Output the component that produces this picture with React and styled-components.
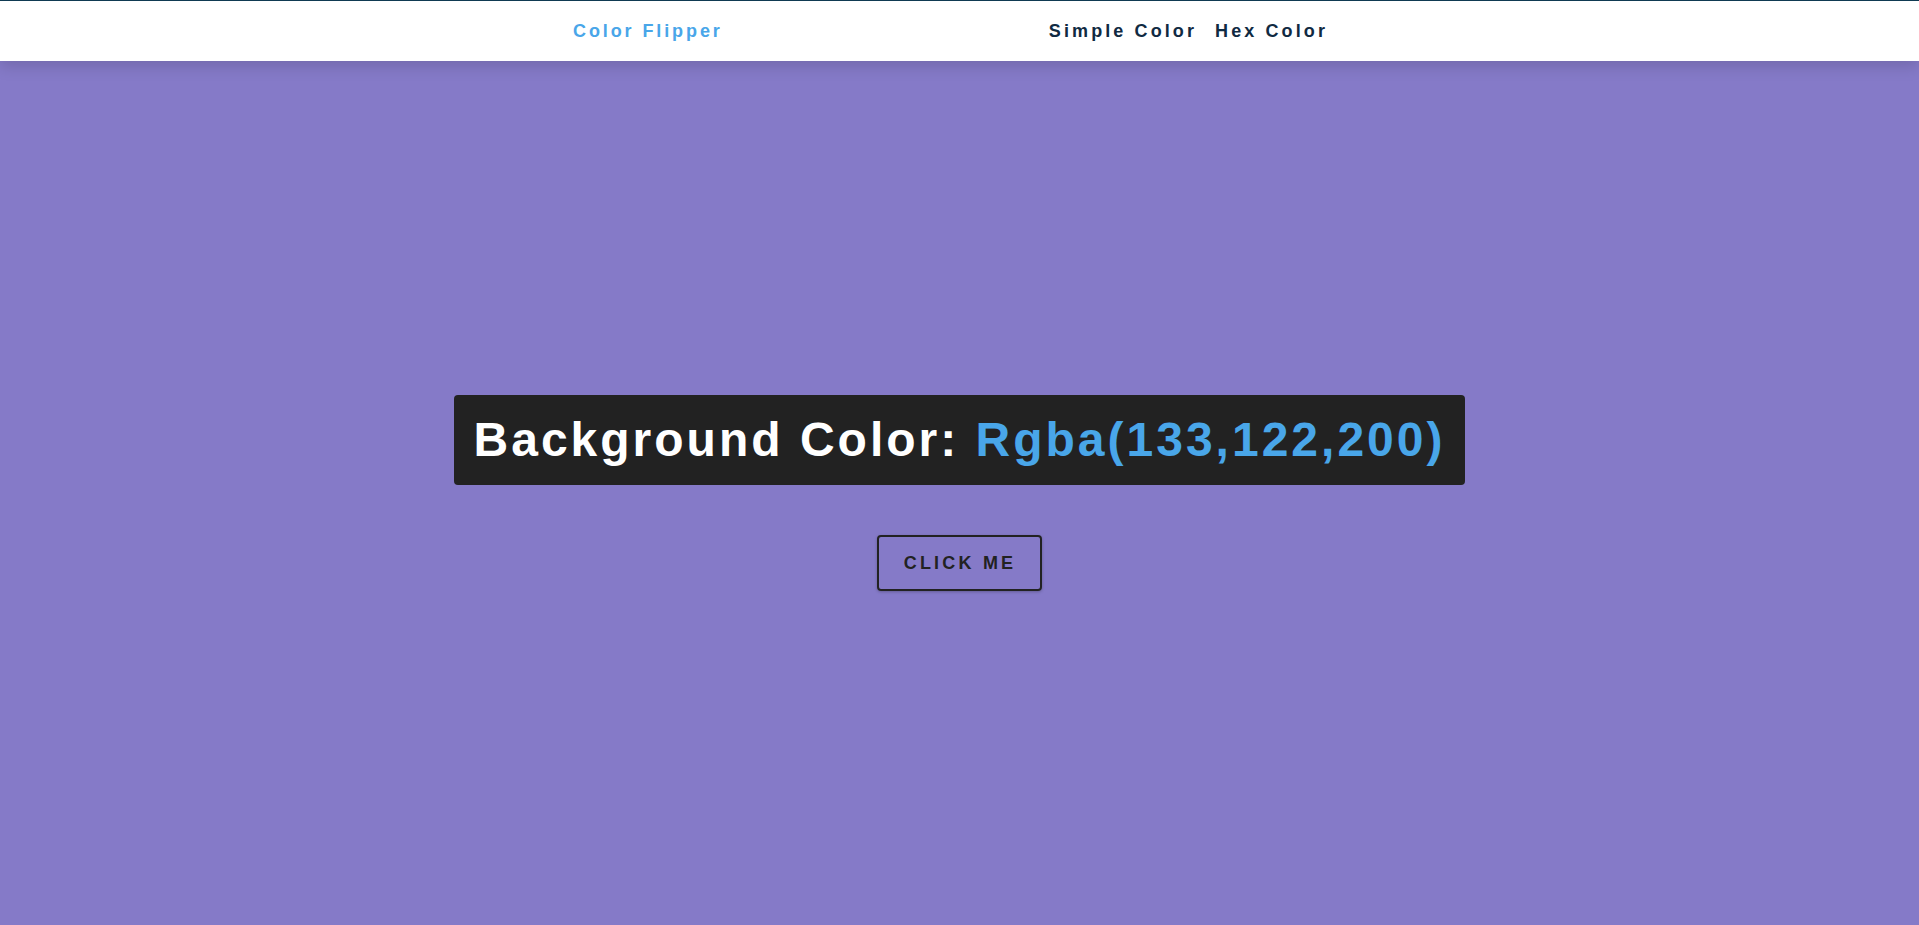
import styled, { createGlobalStyle } from 'styled-components';

const GlobalStyle = createGlobalStyle`
    * {
        box-sizing: border-box;
    }
    body {
        margin: 0;
        font-family: "Liberation Sans", Arial, sans-serif;
    }
`;

export default function App() {
    const color = 'Rgba(133,122,200)';

    return (
        <Page bg="rgb(133,122,200)">
            <GlobalStyle />
            <Nav>
                <NavCenter>
                    <Logo>Color Flipper</Logo>
                    <Links>
                        <NavLink href="#">Simple Color</NavLink>
                        <NavLink href="#">Hex Color</NavLink>
                    </Links>
                </NavCenter>
            </Nav>
            <Main>
                <Title>
                    Background Color: <ColorValue>{color}</ColorValue>
                </Title>
                <FlipButton>Click Me</FlipButton>
            </Main>
        </Page>
    );
}

const Page = styled.div`
    display: flex;
    flex-direction: column;
    min-height: 100vh;
    background: ${(p) => p.bg};
`;

const Nav = styled.nav`
    height: 61px;
    background: #fff;
    border-top: 1px solid #0f3a52;
    box-shadow: 0 5px 15px rgba(0, 0, 0, 0.15);
    display: flex;
    justify-content: center;
    align-items: center;
`;

const NavCenter = styled.div`
    width: 773px;
    display: flex;
    justify-content: space-between;
    align-items: center;
`;

const Logo = styled.h4`
    margin: 0;
    font-size: 18px;
    font-weight: bold;
    color: #49a6e9;
    letter-spacing: 2.9px;
`;

const Links = styled.div`
    display: flex;
    align-items: center;
`;

const NavLink = styled.a`
    font-size: 18px;
    font-weight: bold;
    color: #102a42;
    text-decoration: none;
    letter-spacing: 3.1px;
    margin-right: 18px;
`;

const Main = styled.main`
    flex: 1;
    display: flex;
    flex-direction: column;
    justify-content: center;
    align-items: center;
    gap: 50px;
`;

const Title = styled.h2`
    margin: 0;
    padding: 17px 20px;
    background: #222;
    border-radius: 4px;
    color: #fff;
    font-size: 48px;
    line-height: 56px;
    font-weight: bold;
    letter-spacing: 3px;
    white-space: nowrap;
`;

const ColorValue = styled.span`
    color: #49a6e9;
`;

const FlipButton = styled.button`
    height: 56px;
    padding: 0 24px 0 25px;
    background: transparent;
    border: 2px solid #222;
    border-radius: 4px;
    box-shadow: 0 1px 3px rgba(0, 0, 0, 0.25);
    font-family: "Liberation Sans", Arial, sans-serif;
    font-size: 18px;
    font-weight: bold;
    color: #222;
    text-transform: uppercase;
    letter-spacing: 3.2px;
    cursor: pointer;
`;
